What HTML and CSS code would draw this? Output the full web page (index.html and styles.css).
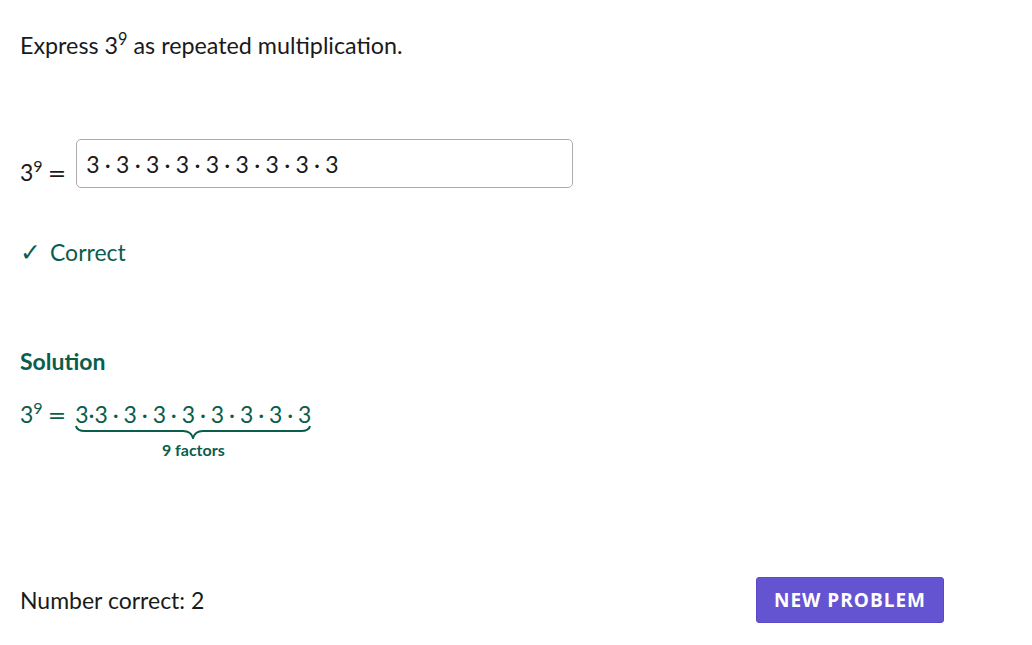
FILE: index.html
```html
<!DOCTYPE html>
<html>
<head>
<meta charset="utf-8">
<link rel="stylesheet" href="styles.css">
</head>
<body>
<div class="page">
  <p class="prompt">Express 3<sup>9</sup> as repeated multiplication.</p>
  <div class="answer-row">
    <span class="lhs">3<sup>9</sup><span class="eq">=</span></span>
    <div class="input">3 · 3 · 3 · 3 · 3 · 3 · 3 · 3 · 3</div>
  </div>
  <p class="feedback"><span class="check">✓</span>Correct</p>
  <h2 class="sol-title">Solution</h2>
  <div class="sol-row">
    <span class="lhs">3<sup>9</sup><span class="eq">=</span></span>
    <span class="brace-group">
      <span class="factors">3·3 · 3 · 3 · 3 · 3 · 3 · 3 · 3</span>
      <svg class="brace" viewBox="0 0 236 14" preserveAspectRatio="none"><path d="M1 1 Q2 6 10 6 L108 6 Q116 6 118 13 Q120 6 128 6 L226 6 Q234 6 235 1" fill="none" stroke="currentColor" stroke-width="2"/></svg>
      <span class="label">9 factors</span>
    </span>
  </div>
  <div class="footer">
    <span class="count">Number correct: 2</span>
    <button class="btn">NEW PROBLEM</button>
  </div>
</div>
</body>
</html>
```
FILE: styles.css
```css
html, body { margin: 0; padding: 0; background: #fff; }
body { font-family: "Lato", "DejaVu Sans", sans-serif; color: #1a1a1a; }
.page { width: 1032px; height: 645px; box-sizing: border-box; padding: 0 20px; display: flex; flex-direction: column; }
sup { font-size: 0.7em; line-height: 0; vertical-align: 0.55em; }
.prompt { margin: 30px 0 0; font-size: 23.3px; line-height: 30px; }
.answer-row { display: flex; align-items: center; margin-top: 79px; gap: 10px; font-size: 23px; }
.lhs { white-space: nowrap; display: inline-block; }
.eq { font-family: "DejaVu Sans", sans-serif; font-size: 22px; margin-left: 5px; }
.answer-row .lhs { padding-top: 16px; }
.input { width: 497px; height: 49px; box-sizing: border-box; border: 1px solid #ababab; border-radius: 5px; padding: 10px 9px 0; font-size: 23px; word-spacing: -0.6px; }
.feedback { margin: 49px 0 0; color: #0b5d4b; font-size: 23px; line-height: 30px; }
.check { font-family: "DejaVu Sans", sans-serif; font-size: 25px; margin-right: 9px; }
.sol-title { margin: 78px 0 0; color: #0b5d4b; font-size: 23px; font-weight: 700; line-height: 30px; }
.sol-row { display: flex; align-items: flex-start; gap: 9px; color: #0b5d4b; font-size: 23px; margin-top: 23px; line-height: 30px; }
.brace-group { display: inline-flex; flex-direction: column; align-items: center; }
.factors { white-space: nowrap; word-spacing: -1px; }
.brace { width: 236px; height: 14px; display: block; margin-top: -4px; }
.label { font-size: 16px; font-weight: 700; line-height: 18px; margin-top: 2px; }
.footer { margin-top: auto; margin-bottom: 22px; display: flex; justify-content: space-between; align-items: center; padding-right: 68px; }
.count { font-size: 23px; }
.btn { width: 188px; height: 46px; background: #6554d2; color: #fff; border: 1px solid #5a49c6; border-radius: 3px; font-family: "Open Sans", sans-serif; font-weight: 700; font-size: 19px; letter-spacing: 1px; padding: 0; }
```
